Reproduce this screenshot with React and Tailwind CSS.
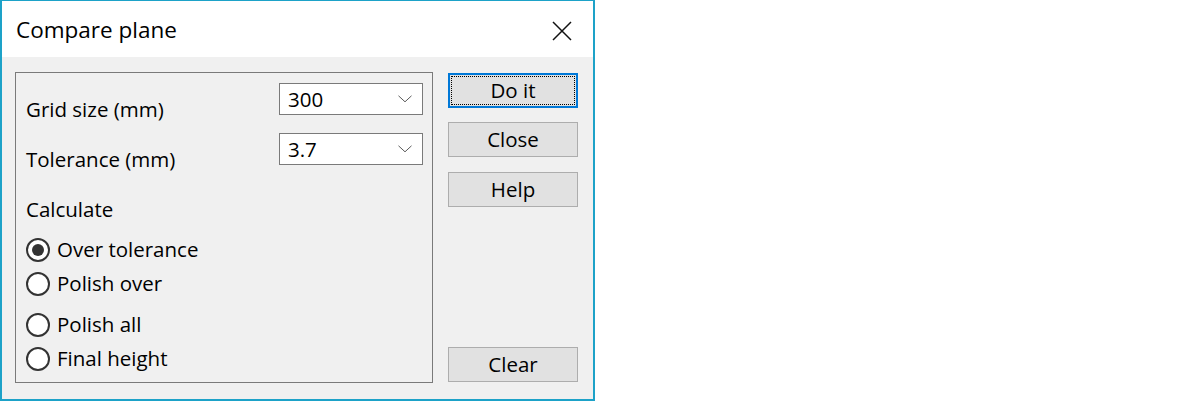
import React from 'react';

// --- dialog "Compare plane" ---
const RADIOS = [
  { label: 'Over tolerance', checked: true, mt: 'mt-[18px]' },
  { label: 'Polish over', checked: false, mt: 'mt-[10px]' },
  { label: 'Polish all', checked: false, mt: 'mt-[17px]' },
  { label: 'Final height', checked: false, mt: 'mt-[10px]' },
];

function Combo({ value }) {
  return (
    <div className="w-[144px] h-[32px] bg-white border border-[#7a7a7a] flex items-center justify-between pl-[8px] pr-[10px]">
      <span className="leading-none">{value}</span>
      <svg width="14" height="8" viewBox="0 0 14 8" className="text-[#5a5a5a]">
        <path d="M0.5 0.8 L7 6.8 L13.5 0.8" fill="none" stroke="currentColor" strokeWidth="1" />
      </svg>
    </div>
  );
}

function Radio({ label, checked, mt }) {
  return (
    <div className={`flex items-center gap-[7px] h-[24px] ${mt}`}>
      <div className="w-[24px] h-[24px] rounded-full border-2 border-[#333333] bg-white flex items-center justify-center shrink-0">
        {checked && <div className="w-[12px] h-[12px] rounded-full bg-[#333333]" />}
      </div>
      <span className="leading-none">{label}</span>
    </div>
  );
}

function Button({ children, focused, className = '' }) {
  return (
    <div
      className={`w-[130px] h-[35px] bg-[#e1e1e1] flex items-center justify-center ${
        focused ? 'border-2 border-[#0078d7] p-[1px]' : 'border border-[#adadad]'
      } ${className}`}
    >
      {focused ? (
        <div className="w-full h-full border border-dotted border-black flex items-center justify-center">
          <span className="leading-none">{children}</span>
        </div>
      ) : (
        <span className="leading-none">{children}</span>
      )}
    </div>
  );
}

export default function App() {
  return (
    <div className="w-[1200px] h-[401px] bg-white" style={{ fontFamily: '"Open Sans", "Noto Sans", sans-serif' }}>
      <div className="w-[595px] h-[401px] border-t border-l-2 border-r-2 border-b-2 border-[#1da2c8] flex flex-col text-[20.5px] text-black">
        {/* Titolo */}
        <div className="h-[56px] bg-white flex items-center justify-between pl-[14px] pr-[21px] shrink-0">
          <span className="text-[22.5px] leading-none mt-[3px]">Compare plane</span>
          <svg width="20" height="20" viewBox="0 0 20 20" className="mt-[4px]">
            <path d="M1 1 L19 19 M19 1 L1 19" stroke="#111" strokeWidth="1.5" fill="none" />
          </svg>
        </div>

        {/* Corpo */}
        <div className="flex-1 bg-[#f0f0f0] flex pl-[13px] pt-[15px] pb-[15px]">
          <div className="w-[418px] h-[311px] border border-[#7a7a7a] flex flex-col pl-[10px] pr-[9px] pt-[10px]">
            <div className="flex justify-between h-[32px]">
              <span className="mt-[16px] leading-none">Grid size (mm)</span>
              <Combo value="300" />
            </div>
            <div className="flex justify-between h-[32px] mt-[18px]">
              <span className="mt-[16px] leading-none">Tolerance (mm)</span>
              <Combo value="3.7" />
            </div>
            <span className="mt-[34px] leading-none">Calculate</span>
            {RADIOS.map((r) => (
              <Radio key={r.label} {...r} />
            ))}
          </div>

          <div className="flex flex-col ml-[15px] pt-[1px] pb-[2px]">
            <Button focused>Do it</Button>
            <Button className="mt-[14px]">Close</Button>
            <Button className="mt-[15px]">Help</Button>
            <Button className="mt-auto">Clear</Button>
          </div>
        </div>
      </div>
    </div>
  );
}
